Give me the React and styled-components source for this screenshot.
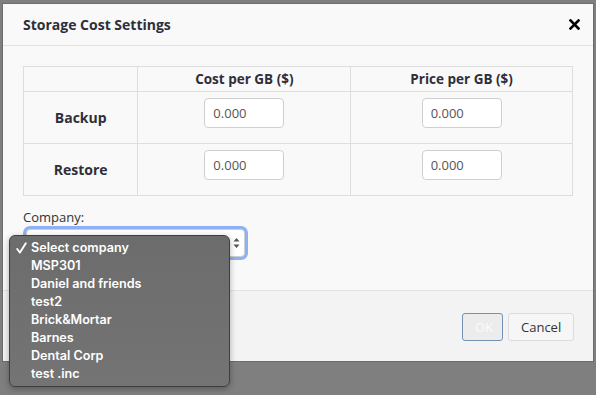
import styled, { createGlobalStyle } from "styled-components";

const GlobalStyle = createGlobalStyle`
  html, body {
    margin: 0;
    padding: 0;
    background: #7f7f7f;
    font-family: "Open Sans", "Liberation Sans", sans-serif;
  }
`;

const Backdrop = styled.div`
  position: relative;
  width: 596px;
  height: 395px;
  padding: 4px 3px 0 3px;
  box-sizing: border-box;
  background: #7f7f7f;
  overflow: hidden;
`;

const Modal = styled.div`
  width: 590px;
  background: #f9f9f9;
  display: flex;
  flex-direction: column;
  box-shadow: 0 0 0 1px rgba(0, 0, 0, 0.15);
`;

const Header = styled.div`
  height: 41px;
  padding: 0 13px 0 20px;
  display: flex;
  align-items: center;
  justify-content: space-between;
  border-bottom: 1px solid #e3e3e3;
`;

const Title = styled.h4`
  margin: 0;
  font-size: 14px;
  font-weight: 700;
  color: #2f2f3a;
`;

const Close = styled.button`
  border: none;
  background: none;
  padding: 0;
  width: 12px;
  height: 12px;
  display: flex;
  align-items: center;
  justify-content: center;
  cursor: pointer;
`;

const Body = styled.div`
  padding: 20px 20px 0 20px;
  height: 245px;
  box-sizing: border-box;
  border-bottom: 1px solid #e3e3e3;
`;

const Table = styled.table`
  width: 550px;
  border-collapse: collapse;
  font-size: 13px;
  color: #2f2f3a;

  th, td {
    border: 1px solid #dedede;
    text-align: center;
    vertical-align: middle;
    padding: 0;
  }
`;

const HeadCell = styled.th`
  height: 24px;
  font-size: 13.5px;
  font-weight: 700;
  width: ${({ $w }) => $w}px;
`;

const RowHead = styled.th`
  height: 51px;
  font-size: 14px;
  font-weight: 700;
`;

const Cell = styled.td`
  && {
    padding-bottom: 10px;
  }
`;

const NumInput = styled.input`
  width: 80px;
  height: 30px;
  box-sizing: border-box;
  border: 1px solid #cfcfcf;
  border-radius: 4px;
  background: #fff;
  padding: 0 8px;
  font-family: "Open Sans", "Liberation Sans", sans-serif;
  font-size: 13px;
  color: #555;
  vertical-align: middle;
`;

const Field = styled.div`
  margin-top: 13px;
  display: flex;
  flex-direction: column;
  gap: 4px;
`;

const Label = styled.label`
  font-size: 13px;
  color: #333;
  line-height: 16px;
`;

const SelectBox = styled.div`
  width: 219px;
  height: 28px;
  margin-left: 3px;
  border: 1px solid #cfcfcf;
  border-radius: 4px;
  background: #fff;
  box-shadow: 0 0 0 3px #8fb0f2;
  display: flex;
  align-items: center;
  justify-content: flex-end;
  padding-right: 4px;
  box-sizing: border-box;
`;

const Footer = styled.div`
  height: 70px;
  background: #f3f3f3;
  display: flex;
  align-items: center;
  justify-content: flex-end;
  gap: 5px;
  padding: 1px 19px 0 0;
  box-sizing: border-box;
`;

const Button = styled.button`
  height: 28px;
  padding: 0 12px;
  border-radius: 3px;
  font-family: "Open Sans", "Liberation Sans", sans-serif;
  font-size: 13px;
  border: 1px solid ${({ $primary }) => ($primary ? "#7391b3" : "#dcdcdc")};
  background: ${({ $primary }) => ($primary ? "#ececec" : "#f6f6f6")};
  color: ${({ $primary }) => ($primary ? "#fbfbfb" : "#333")};
  width: ${({ $w }) => $w}px;
`;

const Menu = styled.ul`
  position: absolute;
  left: 9px;
  top: 235px;
  width: 221px;
  height: 152px;
  box-sizing: border-box;
  margin: 0;
  padding: 3px 0 0 0;
  list-style: none;
  background: linear-gradient(#6c6c6c, #747474);
  border: 1px solid #3e3e3e;
  border-radius: 6px;
  box-shadow: 0 2px 6px rgba(0, 0, 0, 0.3);
  font-family: Inter, "Liberation Sans", sans-serif;
  font-size: 12.6px;
  font-weight: 600;
  color: #fff;
`;

const MenuItem = styled.li`
  position: relative;
  height: 18px;
  line-height: 18px;
  padding-left: 21px;
`;

const Check = styled.svg`
  position: absolute;
  left: 6px;
  top: 3px;
`;

const companies = [
  "Select company",
  "MSP301",
  "Daniel and friends",
  "test2",
  "Brick&Mortar",
  "Barnes",
  "Dental Corp",
  "test .inc",
];

const App = () => {
  return (
    <Backdrop>
      <GlobalStyle />
      <Modal>
        <Header>
          <Title>Storage Cost Settings</Title>
          <Close aria-label="close">
            <svg width="11" height="11" viewBox="0 0 11 11">
              <path d="M1.5 1.5 L9.5 9.5 M9.5 1.5 L1.5 9.5" stroke="#000" strokeWidth="2.6" strokeLinecap="square" />
            </svg>
          </Close>
        </Header>

        <Body>
          <Table>
            <thead>
              <tr>
                <HeadCell $w={114} />
                <HeadCell $w={213}>Cost per GB ($)</HeadCell>
                <HeadCell $w={222}>Price per GB ($)</HeadCell>
              </tr>
            </thead>
            <tbody>
              <tr>
                <RowHead>Backup</RowHead>
                <Cell><NumInput defaultValue="0.000" /></Cell>
                <Cell><NumInput defaultValue="0.000" /></Cell>
              </tr>
              <tr>
                <RowHead>Restore</RowHead>
                <Cell><NumInput defaultValue="0.000" /></Cell>
                <Cell><NumInput defaultValue="0.000" /></Cell>
              </tr>
            </tbody>
          </Table>

          <Field>
            <Label>Company:</Label>
            <SelectBox>
              <svg width="7" height="12" viewBox="0 0 7 12">
                <path d="M0.5 4.5 L3.5 1 L6.5 4.5 Z M0.5 7.5 L3.5 11 L6.5 7.5 Z" fill="#555" />
              </svg>
            </SelectBox>
          </Field>
        </Body>

        <Footer>
          <Button $primary $w={41}>OK</Button>
          <Button $w={66}>Cancel</Button>
        </Footer>
      </Modal>

      {/* native dropdown popup open over the select */}
      <Menu>
        {companies.map((c, i) => (
          <MenuItem key={c}>
            {i === 0 && (
              <Check width="11" height="12" viewBox="0 0 11 12">
                <path d="M1.2 7 L4 10.6 L9.8 1.2" fill="none" stroke="#fff" strokeWidth="1.9" strokeLinecap="round" strokeLinejoin="round" />
              </Check>
            )}
            {c}
          </MenuItem>
        ))}
      </Menu>
    </Backdrop>
  );
};

export default App;
